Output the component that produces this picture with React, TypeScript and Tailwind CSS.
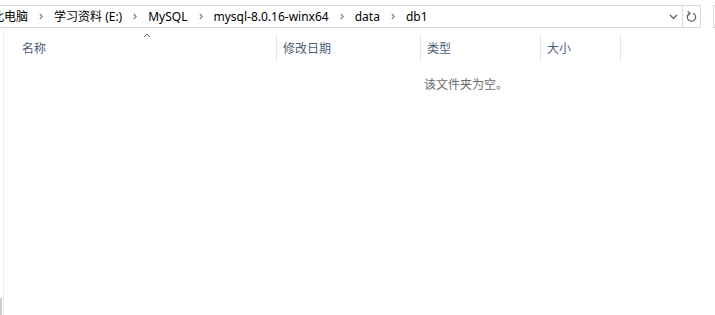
import React from "react";

const font = { fontFamily: '"Noto Sans", "Noto Sans CJK SC", sans-serif' };

function Sep() {
  return (
    <svg width="4" height="7" viewBox="0 0 4 7" className="shrink-0">
      <path d="M0.8 1l2.4 2.5-2.4 2.5" fill="none" stroke="#808080" strokeWidth="1.1" />
    </svg>
  );
}

function Crumb({ children }: { children: React.ReactNode }) {
  return <span className="text-[12px] text-black whitespace-nowrap leading-none">{children}</span>;
}

function Column({ label, width }: { label: string; width: string }) {
  return (
    <div className={`${width} h-full border-l border-[#e5e5e5] pl-[6px] flex items-center shrink-0`}>
      <span className="text-[12px] text-[#4c607a] leading-none">{label}</span>
    </div>
  );
}

export default function App() {
  return (
    <div className="w-[715px] h-[315px] bg-white overflow-hidden relative" style={font}>
      {/* Address bar row */}
      <div className="flex items-start pt-[5px] h-[30px]">
        <div className="flex h-[23px] w-[702px] -ml-px border border-[#d9d9d9] items-center shrink-0">
          <div className="flex items-center flex-1 h-full -ml-[8px] gap-[11px] overflow-hidden">
            <Crumb>此电脑</Crumb>
            <Sep />
            <Crumb>学习资料 (E:)</Crumb>
            <Sep />
            <Crumb>MySQL</Crumb>
            <Sep />
            <Crumb>mysql-8.0.16-winx64</Crumb>
            <Sep />
            <Crumb>data</Crumb>
            <Sep />
            <Crumb>db1</Crumb>
          </div>
          <div className="w-[14px] h-full flex items-center justify-center shrink-0 mr-[2px]">
            <svg width="9" height="6" viewBox="0 0 9 6">
              <path d="M1 1l3.5 3.5L8 1" fill="none" stroke="#555" strokeWidth="1.2" />
            </svg>
          </div>
          <div className="w-[18px] h-full border-l border-[#d9d9d9] flex items-center justify-center shrink-0">
            <svg width="11" height="13" viewBox="0 0 11 13">
              <path d="M7.2 3.2A4.2 4.2 0 1 1 3.8 3.2" fill="none" stroke="#555" strokeWidth="1.1" />
              <path d="M1.6 1.2l2.4 2 -2.2 2.2" fill="none" stroke="#555" strokeWidth="1.1" />
            </svg>
          </div>
        </div>
        <div className="ml-[12px] h-[23px] w-[20px] border border-[#d9d9d9] shrink-0" />
      </div>

      {/* Body */}
      <div className="flex h-[285px]">
        <div className="w-[3px] shrink-0 flex flex-col justify-end">
          <div className="w-[2px] h-[17px] bg-[#cfcfcf]" />
        </div>
        <div className="flex-1 border-l border-[#f0f0f0] flex flex-col">
          {/* Header */}
          <div className="relative flex h-[32px] pt-[5px]">
            <div className="w-[272px] h-full flex items-center pl-[18px] shrink-0">
              <span className="text-[12px] text-[#4c607a] leading-none">名称</span>
            </div>
            <Column label="修改日期" width="w-[144px]" />
            <Column label="类型" width="w-[120px]" />
            <Column label="大小" width="w-[80px]" />
            <div className="h-full border-l border-[#e5e5e5]" />
            <svg
              width="8"
              height="5"
              viewBox="0 0 8 5"
              className="absolute left-[139px] top-[3px]"
            >
              <path d="M1 4l3-3 3 3" fill="none" stroke="#666" strokeWidth="1" />
            </svg>
          </div>
          <div className="pl-[420px] pt-[9px]">
            <span className="text-[12px] text-[#6d6d6d] leading-none">该文件夹为空。</span>
          </div>
        </div>
      </div>
    </div>
  );
}
